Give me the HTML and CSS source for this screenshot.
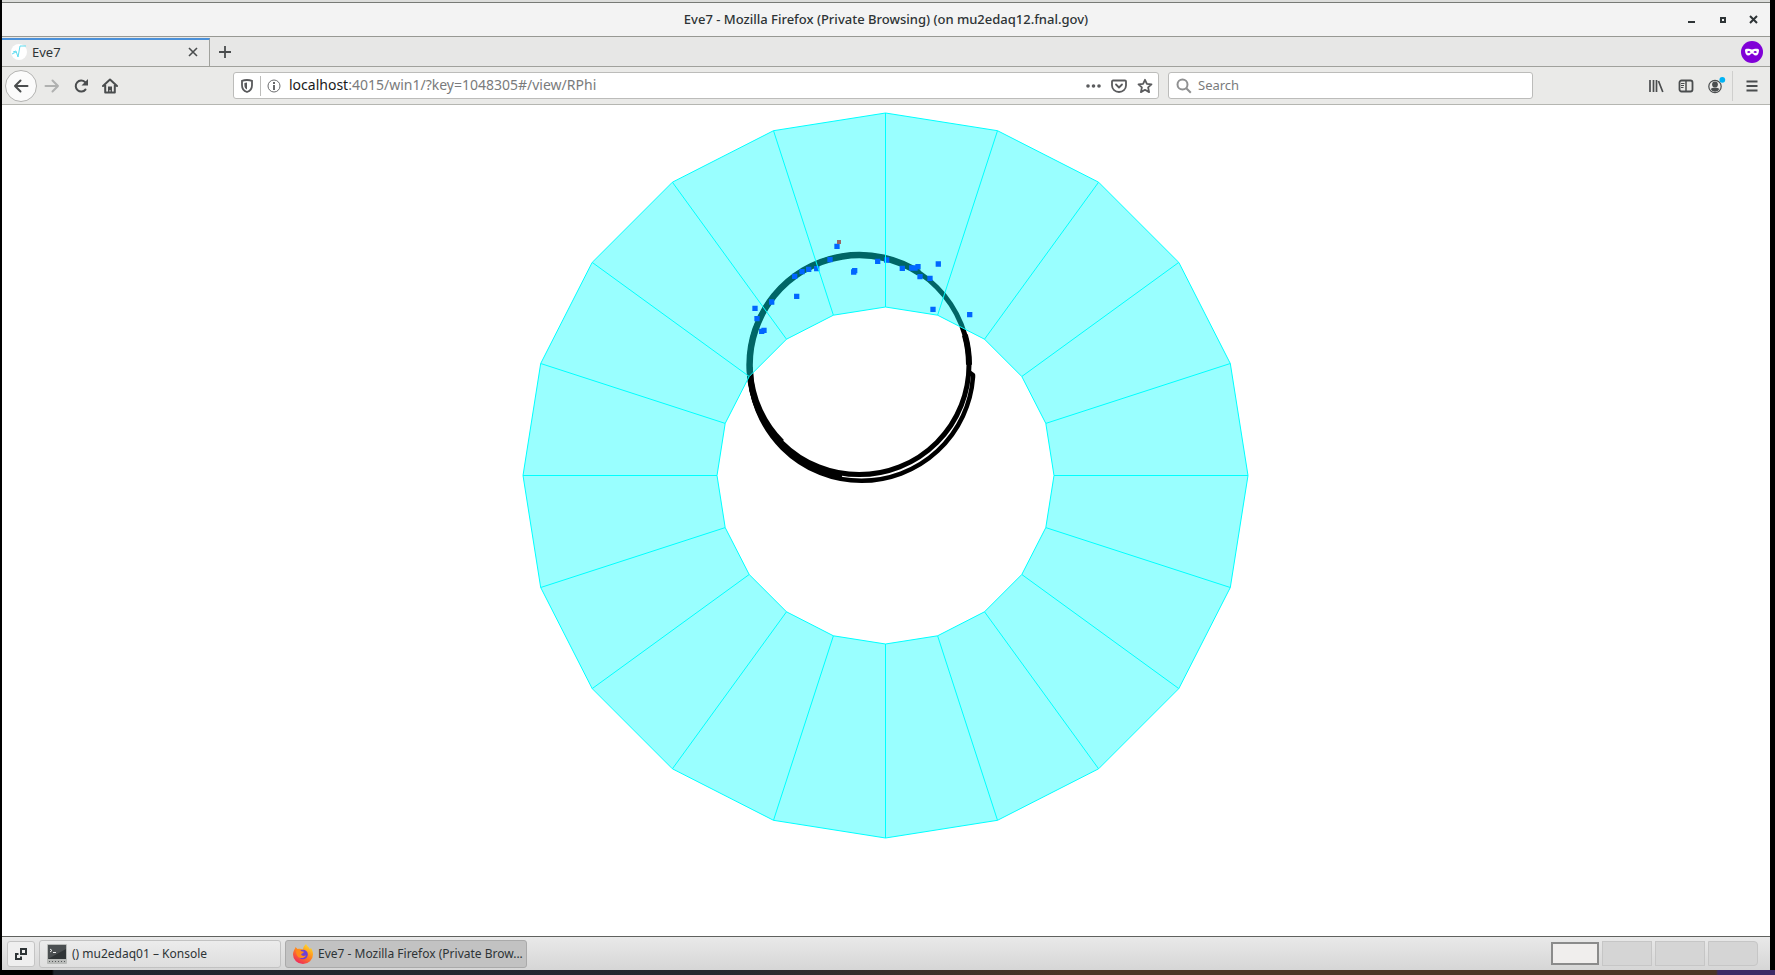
FILE: index.html
```
<!DOCTYPE html>
<html lang="en">
<head>
<meta charset="utf-8">
<title>Eve7</title>
<link rel="stylesheet" href="styles.css">
</head>
<body>
<div class="screen">
  <div class="window">
    <header class="titlebar">
      <h1 class="title">Eve7 - Mozilla Firefox (Private Browsing) (on mu2edaq12.fnal.gov)</h1>
      <div class="window-controls">
        <button class="win-btn" aria-label="Minimize"><svg width="9" height="9" viewBox="0 0 9 9"><path d="M1 7h7" stroke="#2e3436" stroke-width="2"/></svg></button>
        <button class="win-btn" aria-label="Maximize"><svg width="9" height="9" viewBox="0 0 9 9"><path d="M3 3h4v4H3z" fill="none" stroke="#2e3436" stroke-width="2"/></svg></button>
        <button class="win-btn" aria-label="Close"><svg width="9" height="9" viewBox="0 0 9 9"><path d="M1 1l7 7M8 1l-7 7" stroke="#2e3436" stroke-width="2"/></svg></button>
      </div>
    </header>

    <div class="tabstrip">
      <div class="tab">
        <svg width="16" height="16" viewBox="0 0 16 16"><circle cx="8" cy="8" r="8" fill="#fff"/><path d="M2 8l3-1 2 6 2-11h6M1 10l4-2" fill="none" stroke="#5fdcf0" stroke-width="1"/></svg>
        <span class="tab-label">Eve7</span>
        <button class="tab-close" aria-label="Close tab"><svg width="10" height="10" viewBox="0 0 10 10"><path d="M1 1l8 8M9 1l-8 8" stroke="#4a4d4e" stroke-width="1.6"/></svg></button>
      </div>
      <button class="new-tab" aria-label="New tab"><svg width="14" height="14" viewBox="0 0 14 14"><path d="M7 1v12M1 7h12" stroke="#4a4d4e" stroke-width="1.8"/></svg></button>
      <svg class="private-badge" width="22" height="22" viewBox="0 0 22 22" role="img" aria-label="Private browsing"><circle cx="11" cy="11" r="11" fill="#8000d7"/><path fill="#fff" fill-rule="evenodd" d="M4 9c0-1.500 3.500-1.600 5-.9 1.300.6 2.700.6 4 0 1.500-.7 5-.6 5 .9 0 3.500-1.200 5.600-3.400 5.600-1.900 0-2.300-2-3.600-2s-1.700 2-3.600 2C5.200 14.600 4 12.500 4 9zm2 2.200c1.300 1 2.500.9 3.600 0-.8-1.500-2.800-1.500-3.600 0zm6.400 0c1.100.9 2.300 1 3.600 0-.8-1.500-2.800-1.500-3.600 0z"/></svg>
    </div>

    <nav class="navbar">
      <div class="nav-buttons">
        <button class="back" aria-label="Back"><svg width="16" height="16" viewBox="0 0 16 16"><path d="M14.500 8H2M7.500 2.500L2 8l5.500 5.500" fill="none" stroke="#4a4d4e" stroke-width="2" stroke-linecap="round" stroke-linejoin="round"/></svg></button>
        <button class="tool" aria-label="Forward"><svg width="16" height="16" viewBox="0 0 16 16"><path d="M1.500 8H14M8.500 2.500L14 8l-5.500 5.500" fill="none" stroke="#b0b1b0" stroke-width="2" stroke-linecap="round" stroke-linejoin="round"/></svg></button>
        <button class="tool" aria-label="Reload"><svg width="16" height="16" viewBox="0 0 16 16"><path d="M12.500 11.500A5.500 5.500 0 1 1 12 4" fill="none" stroke="#4a4d4e" stroke-width="2" stroke-linecap="round"/><path d="M15 1v6.500H8.500z" fill="#4a4d4e"/></svg></button>
        <button class="tool" aria-label="Home"><svg width="16" height="16" viewBox="0 0 16 16"><path d="M1 8l7-6.500L15 8M3.200 7v7.500h9.600V7" fill="none" stroke="#4a4d4e" stroke-width="2" stroke-linecap="round" stroke-linejoin="round"/><path d="M6 14V8.500h4V14H8.500v-2H7.500v2z" fill="#4a4d4e"/></svg></button>
      </div>
      <div class="field url-field">
        <svg width="14" height="16" viewBox="0 0 14 16"><path d="M7 2c2 0 3.700.3 5 .8v4.400c0 3.400-2 5.800-5 6.800-3-1-5-3.400-5-6.800V2.800C3.300 2.300 5 2 7 2z" fill="none" stroke="#58595b" stroke-width="1.800"/><path d="M7 4.500v7C5 10.500 4.400 9 4.400 7V5c.8-.3 1.600-.5 2.600-.5z" fill="#58595b"/></svg>
        <span class="divider"></span>
        <svg width="14" height="14" viewBox="0 0 14 14"><circle cx="7" cy="7" r="6" fill="none" stroke="#6b6c6e"/><path d="M7 3v2M7 6v5" stroke="#58595b" stroke-width="1.800"/></svg>
        <a class="url" href="#/view/RPhi"><span class="host">localhost</span>:4015/win1/?key=1048305#/view/RPhi</a>
        <div class="url-actions">
          <button class="icon-btn" aria-label="Page actions"><svg width="16" height="16" viewBox="0 0 16 16"><g fill="#5a5b5d"><circle cx="3" cy="8" r="1.800"/><circle cx="8.500" cy="8" r="1.800"/><circle cx="14" cy="8" r="1.800"/></g></svg></button>
          <button class="icon-btn" aria-label="Save to Pocket"><svg width="16" height="16" viewBox="0 0 16 16"><path d="M2 2.500h12a1 1 0 0 1 1 1V7.500a7 6.500 0 0 1-14 0v-4a1 1 0 0 1 1-1z" fill="none" stroke="#5a5b5d" stroke-width="1.800"/><path d="M5 6.500l3 3 3-3" fill="none" stroke="#5a5b5d" stroke-width="1.800" stroke-linecap="round" stroke-linejoin="round"/></svg></button>
          <button class="icon-btn" aria-label="Bookmark"><svg width="16" height="16" viewBox="0 0 16 16"><path d="M8 1.800l1.900 4.100 4.600.5-3.400 3 1 4.700L8 11.800l-4.100 2.300 1-4.700-3.400-3 4.600-.5z" fill="none" stroke="#5a5b5d" stroke-width="1.800" stroke-linejoin="round"/></svg></button>
        </div>
      </div>
      <label class="field search-field">
        <svg width="16" height="16" viewBox="0 0 16 16"><circle cx="6.500" cy="6.500" r="5" fill="none" stroke="#8f9091" stroke-width="2"/><path d="M10.300 10.300l4.500 4.500" stroke="#8f9091" stroke-width="2"/></svg>
        <input class="search" type="text" placeholder="Search" aria-label="Search">
      </label>
      <div class="menu-buttons">
        <button class="tool" aria-label="Library"><svg width="16" height="16" viewBox="0 0 16 16"><path d="M2 2v12M5.500 2v12M8.500 2v12M10.500 3l4.300 11" fill="none" stroke="#4a4d4e" stroke-width="1.700"/></svg></button>
        <button class="tool" aria-label="Sidebars"><svg width="16" height="16" viewBox="0 0 16 16"><rect x="1.500" y="2.500" width="13" height="11" rx="2" fill="none" stroke="#4a4d4e" stroke-width="1.800"/><path d="M8 2.500v11" stroke="#4a4d4e" stroke-width="1.500"/><path d="M3 5.500h3.500M3 7.500h3M3 9.500h2.500" stroke="#4a4d4e"/></svg></button>
        <button class="tool" aria-label="Account"><svg width="20" height="20" viewBox="0 0 20 20"><circle cx="9" cy="10.500" r="6.200" fill="none" stroke="#4a4d4e" stroke-width="1.200"/><circle cx="9" cy="8.500" r="2.900" fill="#4a4d4e"/><path d="M4.600 13c.8-1 2.200-1.300 4.400-1.300s3.600.3 4.400 1.300a5 5 0 0 1-8.800 0z" fill="#4a4d4e"/><circle cx="16.300" cy="3.800" r="2.900" fill="#00b3f4"/></svg></button>
        <span class="divider tall"></span>
        <button class="tool" aria-label="Menu"><svg width="14" height="14" viewBox="0 0 14 14"><path d="M1.500 2.500h11M1.500 7h11M1.500 11.500h11" stroke="#4a4d4e" stroke-width="1.800"/></svg></button>
      </div>
    </nav>

    <main class="view">
      <svg class="scene" viewBox="0 0 1768 831" preserveAspectRatio="xMidYMin meet" role="img" aria-label="RPhi view">
        <g fill="none" stroke="#000">
          <circle cx="857.200" cy="259.800" r="109.800" stroke-width="5"/>
          <path d="M917 167.700A109.800 109.800 0 0 0 779.600 337.400" stroke-width="6.500"/>
          <path d="M962.900 230A109.800 109.800 0 0 1 967 259.800" stroke-width="6"/>
          <path d="M967 267l4 3 0 2.200A111.800 111.800 0 0 1 859.500 375.800A111.800 111.800 0 0 1 747.700 264" stroke-width="4.500" stroke-linejoin="round"/>
          <path d="M748 262A111 111 0 0 0 840 371.200" stroke-width="5.500"/>
        </g>
        <path stroke="#00f" stroke-width="5.300" stroke-linecap="square" d="M835 141.300h0M828 154.700h0M814.700 163.700h0M806.700 164.300h0M800 166.700h0M792.700 171.300h0M794.700 191.300h0M769.700 197h0M753 203.300h0M755 213.700h0M759.700 226.300h0M762 225.300h0M851.700 167h0M852.700 165.700h0M875.700 156.300h0M884.700 155h0M900.300 163.300h0M909.700 163h0M913 163h0M916 161.700h0M918 171.700h0M928 173.300h0M936.300 159h0M931 204.300h0M967.700 209.700h0"/>
        <path stroke="#f00" stroke-width="4" stroke-linecap="square" d="M837 137h0"/>
        <g transform="translate(883.500 370.500)">
          <path fill="#0ff" fill-opacity=".4" fill-rule="evenodd" d="M362.500 0L344.800 112 293.300 213.100 213.100 293.300 112 344.800 0 362.500-112 344.800-213.100 293.300-293.300 213.100-344.800 112-362.500 0-344.800-112-293.300-213.100-213.100-293.300-112-344.800 0-362.500 112-344.800 213.100-293.300 293.300-213.100 344.800-112zM168.500 0L160.300 52.100 136.300 99 99 136.300 52.100 160.300 0 168.500-52.100 160.300-99 136.300-136.300 99-160.300 52.100-168.500 0-160.300-52.100-136.300-99-99-136.300-52.100-160.300 0-168.500 52.100-160.300 99-136.300 136.300-99 160.300-52.100z"/>
          <path fill="none" stroke="#0ff" d="M362.500 0L344.800 112 293.300 213.100 213.100 293.300 112 344.800 0 362.500-112 344.800-213.100 293.300-293.300 213.100-344.800 112-362.500 0-344.800-112-293.300-213.100-213.100-293.300-112-344.800 0-362.500 112-344.800 213.100-293.300 293.300-213.100 344.800-112zM168.500 0L160.300 52.100 136.300 99 99 136.300 52.100 160.300 0 168.500-52.100 160.300-99 136.300-136.300 99-160.300 52.100-168.500 0-160.300-52.100-136.300-99-99-136.300-52.100-160.300 0-168.500 52.100-160.300 99-136.300 136.300-99 160.300-52.100zM168.500 0H362.500M160.300 52.100L344.800 112M136.300 99L293.300 213.100M99 136.300L213.100 293.300M52.100 160.300L112 344.800M0 168.500V362.500M-52.100 160.300L-112 344.800M-99 136.300L-213.100 293.300M-136.300 99L-293.300 213.100M-160.300 52.100L-344.800 112M-168.500 0H-362.500M-160.300-52.100L-344.800-112M-136.300-99L-293.300-213.100M-99-136.300L-213.100-293.300M-52.100-160.300L-112-344.800M0-168.500V-362.500M52.100-160.300L112-344.800M99-136.300L213.100-293.300M136.300-99L293.300-213.100M160.300-52.100L344.800-112"/>
        </g>
      </svg>
    </main>

    <footer class="taskbar">
      <button class="launcher" aria-label="Show desktop"><svg width="14" height="14" viewBox="0 0 14 14"><path d="M7 2h5v5H7zM4.500 7H2v5h5v-2.500" fill="none" stroke="#2e3436" stroke-width="2"/></svg></button>
      <button class="task">
        <svg width="20" height="20" viewBox="0 0 20 20"><rect width="20" height="20" rx="1" fill="#b9bbb9"/><rect x="1" y="1" width="18" height="14" fill="#303436"/><path d="M1 15L19 5V1H1z" fill="#4b4f51"/><path d="M3 5l2 1.500L3 8M6 8.500h3" fill="none" stroke="#eee"/><path d="M2 17.500h16" stroke="#55585a" stroke-dasharray="1 2"/></svg>
        <span class="task-label">() mu2edaq01 – Konsole</span>
      </button>
      <button class="task active">
        <svg width="20" height="20" viewBox="0 0 20 20"><defs><linearGradient id="fx" x1=".8" y1="0" x2=".2" y2="1"><stop offset="0" stop-color="#ffe22e"/><stop offset=".45" stop-color="#ff8a1c"/><stop offset="1" stop-color="#ee1d62"/></linearGradient></defs><path fill="url(#fx)" d="M13 0c.6 2 3 3 4 5.500l.8-1.700C19.500 6 20 8.500 20 10.500A10 9.500 0 0 1 0 10.500C0 8 1 6 2 4.500L2.500 3l2 2c2-.6 4-.4 5.500.5C10 3.500 11.500 1.500 13 0z"/><circle cx="10" cy="10.500" r="4.800" fill="#6f3fd6"/><path fill="#ff8a1c" d="M3 6.500c2.500-1 4.500-.5 5.500.7l2.500.6c-.5 1.500-2 1.500-3 2.700.8 1.700 3.500 1.700 5 .7-.8 3-6 4-8.200 1.300C3.500 11 3 9 3 6.500z"/></svg>
        <span class="task-label">Eve7 - Mozilla Firefox (Private Brow...</span>
      </button>
      <div class="pager">
        <button class="desk current" aria-label="Workspace 1"></button>
        <button class="desk" aria-label="Workspace 2"></button>
        <button class="desk" aria-label="Workspace 3"></button>
        <button class="desk" aria-label="Workspace 4"></button>
      </div>
    </footer>
  </div>
  <div class="desktop-edge"></div>
</div>
</body>
</html>
```

FILE: styles.css
```
* { box-sizing: border-box; }

body {
  margin: 0;
  font-family: "Noto Sans", "Open Sans", sans-serif;
  font-size: 13px;
  line-height: 20px;
  color: #2e3436;
}

button {
  display: flex;
  align-items: center;
  justify-content: center;
  margin: 0;
  padding: 0;
  border: 0;
  background: none;
  font: inherit;
  color: inherit;
}

svg { display: block; flex: none; }

.screen {
  display: flex;
  flex-direction: column;
  height: 100vh;
  background: #000;
}

.window {
  display: flex;
  flex: 1;
  flex-direction: column;
  min-height: 0;
  margin: 0 5px 0 2px;
  border-top: 2px solid #dcdddb;
  background: #fff;
}

/* Title bar */
.titlebar {
  display: grid;
  grid-template-columns: 1fr auto 1fr;
  align-items: center;
  height: 35px;
  padding-bottom: 1px;
  border-top: 1px solid #777975;
  border-bottom: 1px solid #979893;
  background: #f3f3f3;
}

.title {
  grid-column: 2;
  margin: 0;
  font-size: 13px;
  font-weight: 500;
}

.window-controls {
  display: flex;
  justify-content: flex-end;
  gap: 22px;
  padding-right: 12px;
}

/* Tabs */
.tabstrip {
  display: flex;
  align-items: center;
  height: 30px;
  padding-top: 1px;
  border-bottom: 1px solid #a0a19c;
  background: #e7e7e6;
}

.tab {
  display: flex;
  align-items: center;
  gap: 5px;
  width: 208px;
  height: 28px;
  padding: 0 11px 2px 9px;
  border-top: 2px solid #4a90d9;
  border-right: 1px solid #a0a19c;
  background: #eaeae9;
}

.tab-close { margin-left: auto; }

.new-tab { width: 30px; height: 28px; }

.private-badge { margin-left: auto; margin-right: 7px; }

/* Navigation */
.navbar {
  display: flex;
  align-items: center;
  height: 38px;
  padding: 0 3px;
  border-bottom: 1px solid #b5b6b1;
  background: #eaeae8;
}

.nav-buttons {
  display: flex;
  flex: none;
  align-items: center;
  width: 228px;
}

.back {
  width: 32px;
  height: 32px;
  border: 1px solid #b3b3b1;
  border-radius: 50%;
  background: #fbfbfb;
}

.tool { width: 29px; height: 30px; }

.field {
  display: flex;
  align-items: center;
  gap: 6px;
  height: 27px;
  border: 1px solid #bcbcba;
  border-radius: 3px;
  background: #fff;
}

.url-field {
  flex: 913 1 0;
  min-width: 0;
  padding: 0 5px 0 6px;
}

.divider { width: 1px; height: 20px; background: #bcbcba; }

.url {
  flex: 1;
  min-width: 0;
  padding: 0 0 1px 2px;
  overflow: hidden;
  font-size: 14px;
  color: #7a7b7c;
  text-decoration: none;
  white-space: nowrap;
}

.host { color: #1a1a1a; }

.url-actions { display: flex; gap: 10px; }

.search-field {
  flex: 350 1 0;
  min-width: 0;
  margin-left: 9px;
  padding: 0 6px 0 7px;
}

.search {
  flex: 1;
  min-width: 0;
  padding: 0 0 1px;
  border: 0;
  outline: 0;
  background: none;
  font: inherit;
  color: inherit;
}

.search::placeholder { color: #7a7b7c; opacity: 1; }

.menu-buttons {
  display: flex;
  flex: none;
  align-items: center;
  margin-left: 108px;
}

.menu-buttons .tool { width: 30px; }

.divider.tall { height: 30px; margin: 0 4px 0 1px; background: #cfcfcd; }

/* Detector view */
.view { flex: 1; min-height: 0; }

.scene { width: 100%; height: 100%; }

/* Task bar */
.taskbar {
  display: flex;
  align-items: center;
  gap: 4px;
  height: 34px;
  padding: 0 12px 0 5px;
  border-top: 1px solid #5f615e;
  background: linear-gradient(#e9e9e9, #d6d6d6);
}

.launcher {
  width: 28px;
  height: 26px;
  border: 1px solid #c4c4c4;
  border-radius: 3px;
  background: #efefef;
}

.task {
  justify-content: flex-start;
  gap: 5px;
  flex: 0 1 242px;
  min-width: 0;
  height: 28px;
  padding: 0 7px;
  border: 1px solid #c2c2c2;
  border-radius: 3px;
  background: linear-gradient(#ececec, #dedede);
  font-size: 12px;
}

.task.active { border-color: #aaa; background: #c2c2c2; }

.task-label { white-space: nowrap; }

.pager { display: flex; align-items: center; gap: 3px; margin-left: auto; }

.desk {
  width: 50px;
  height: 25px;
  border: 1px solid #c6c6c6;
  background: #d5d5d5;
}

.desk.current { width: 48px; height: 23px; border: 2px solid #8b8b8b; background: #f0eeed; }

.desk:last-child { border-radius: 0 4px 4px 0; }

.desktop-edge {
  height: 5px;
  background: linear-gradient(90deg, #000 52px, #20262e 54px, #252830 40%, #4a3426 60%, #4a3426 1716px, #3c2a66 1718px);
}
```
